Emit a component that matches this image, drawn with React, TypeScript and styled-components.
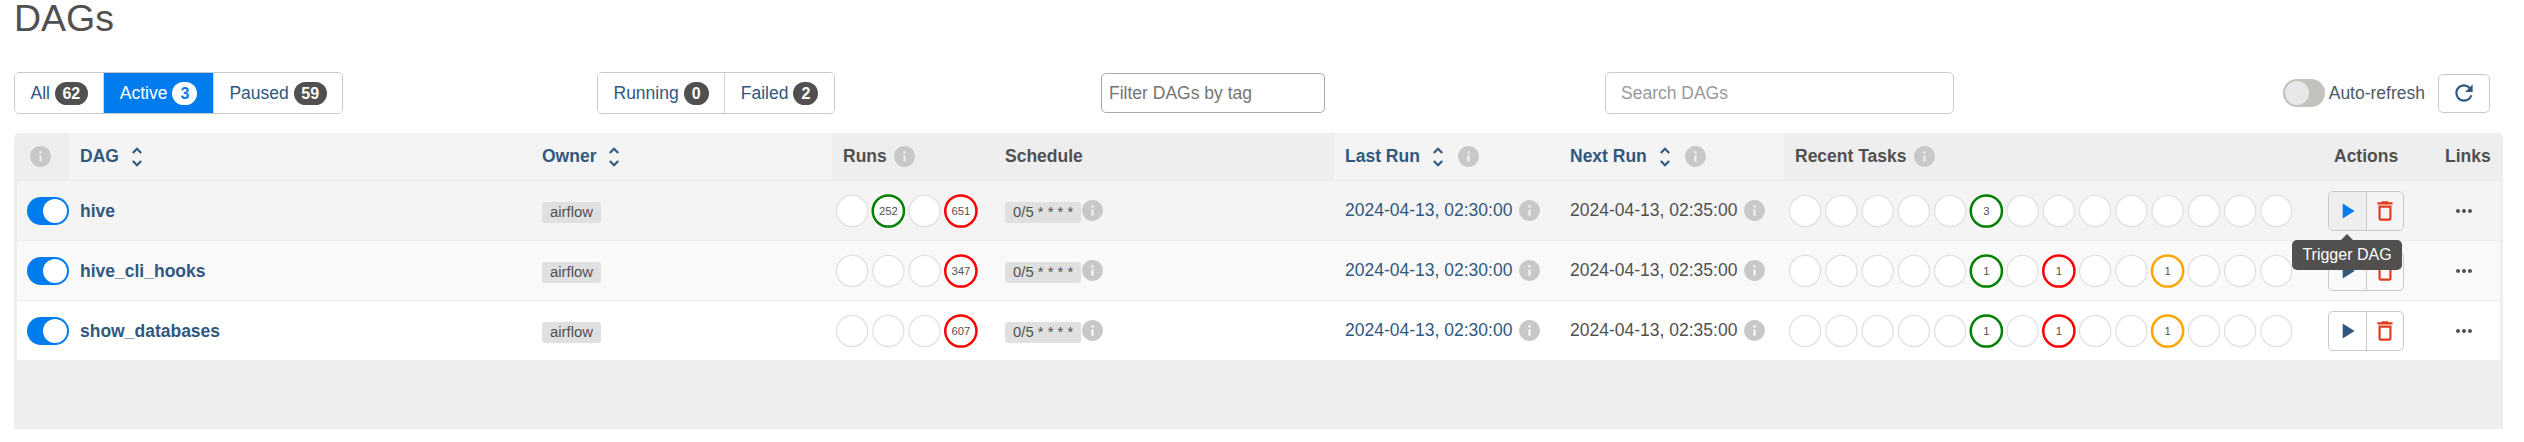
import styled, { createGlobalStyle } from "styled-components";
import {
  MdDeleteOutline,
  MdInfo,
  MdMoreHoriz,
  MdPlayArrow,
  MdRefresh,
  MdUnfoldMore,
} from "react-icons/md";

const LINK = "#30587f";
const TEXT = "#51504f";

const GlobalStyle = createGlobalStyle`
  html, body {
    margin: 0;
    background: #fff;
    color: ${TEXT};
    font-family: "Liberation Sans", Arial, sans-serif;
    font-size: 17.5px;
  }
`;

const Page = styled.div`
  padding: 0 21px 0 14px;
`;

const Title = styled.h1`
  margin: 0 0 36px;
  font-size: 37.5px;
  font-weight: 400;
  line-height: 36px;
`;

const Toolbar = styled.div`
  display: grid;
  grid-template-columns: 583px 504px 504px 1fr;
  align-items: center;
  height: 42px;
  margin-bottom: 19px;
`;

const ButtonGroup = styled.div`
  display: inline-flex;
  justify-self: start;
  height: 42px;
  box-sizing: border-box;
  border: 1px solid #c8c8c8;
  border-radius: 5px;
  overflow: hidden;
`;

const FilterButton = styled.a<{ $active?: boolean }>`
  display: flex;
  align-items: center;
  gap: 5px;
  padding: 0 15.5px;
  color: ${(p) => (p.$active ? "#fff" : LINK)};
  background: ${(p) => (p.$active ? "#017cee" : "#fff")};

  & + & {
    border-left: 1px solid #d4d4d4;
  }
`;

const Badge = styled.span<{ $active?: boolean }>`
  min-width: 25px;
  height: 23px;
  box-sizing: border-box;
  padding: 0 7.5px;
  border-radius: 12px;
  text-align: center;
  font-size: 16px;
  font-weight: 700;
  line-height: 23px;
  color: ${(p) => (p.$active ? "#017cee" : "#fff")};
  background: ${(p) => (p.$active ? "#fff" : TEXT)};
`;

const TagFilter = styled.input`
  width: 224px;
  height: 40px;
  box-sizing: border-box;
  padding: 0 7px;
  border: 1px solid #aaa;
  border-radius: 5px;
  font: inherit;

  &::placeholder {
    color: #757575;
    opacity: 1;
  }
`;

const RightTools = styled.div`
  display: flex;
  align-items: center;
  justify-content: space-between;
  width: 885px;
`;

const Search = styled.input`
  width: 349px;
  height: 42px;
  box-sizing: border-box;
  padding: 0 15px;
  border: 1px solid #ccc;
  border-radius: 5px;
  font: inherit;

  &::placeholder {
    color: #999;
    opacity: 1;
  }
`;

const AutoRefresh = styled.div`
  display: flex;
  align-items: center;
  gap: 4px;
  color: #4d5a66;
`;

const RefreshButton = styled.button`
  display: flex;
  align-items: center;
  justify-content: center;
  width: 52px;
  height: 39px;
  margin-left: 9px;
  padding: 0;
  background: #fff;
  border: 1px solid #c8c8c8;
  border-radius: 5px;
  color: ${LINK};
`;

const Switch = styled.span<{ $on?: boolean }>`
  display: flex;
  flex: none;
  justify-content: ${(p) => (p.$on ? "flex-end" : "flex-start")};
  align-items: center;
  width: 42px;
  height: 28px;
  box-sizing: border-box;
  padding: 0 2px;
  border-radius: 14px;
  background: ${(p) => (p.$on ? "#017cee" : "#c4c2be")};

  &::after {
    content: "";
    width: 24px;
    height: 24px;
    border-radius: 50%;
    background: ${(p) => (p.$on ? "#fff" : "#e8e8e8")};
  }
`;

const Panel = styled.div`
  width: 2489px;
  height: 296px;
  box-sizing: border-box;
  padding: 0 3px;
  background: #eee;
  border-radius: 5px 5px 0 0;
`;

const Table = styled.table`
  width: 2483px;
  table-layout: fixed;
  border-collapse: separate;
  border-spacing: 0;
`;

const HeadCell = styled.th<{ $sortable?: boolean }>`
  height: 47px;
  box-sizing: border-box;
  padding: 0 11px;
  text-align: left;
  font-weight: 700;
  white-space: nowrap;
  color: ${(p) => (p.$sortable ? LINK : TEXT)};
  background: ${(p) => (p.$sortable ? "#f4f4f4" : "#eee")};
`;

const HeadInner = styled.div`
  display: flex;
  align-items: center;
`;

const Row = styled.tr<{ $bg: string }>`
  background: ${(p) => p.$bg};
`;

const Cell = styled.td<{ $pad?: string }>`
  height: 60px;
  box-sizing: border-box;
  padding: ${(p) => p.$pad ?? "0 11px"};
  border-top: 1px solid #eee;
  white-space: nowrap;
`;

const CellInner = styled.div`
  display: flex;
  align-items: center;
`;

const DagLink = styled.a`
  display: inline-block;
  margin-top: 1px;
  font-weight: 700;
  color: ${LINK};
`;

const Tag = styled.span`
  display: inline-block;
  margin-top: 3px;
  padding: 0 8px;
  height: 21px;
  border-radius: 3px;
  background: #e0e0e0;
  font-size: 14.875px;
  line-height: 21px;
`;

const Info = styled(MdInfo)<{ $gap?: number }>`
  flex: none;
  margin-left: ${(p) => p.$gap ?? 5}px;
  font-size: 25px;
  color: #c8c8c8;
`;

const Sort = styled(MdUnfoldMore)`
  flex: none;
  margin-left: 5px;
  font-size: 26px;
  color: ${LINK};
`;

const LastRun = styled.a`
  color: ${LINK};
`;

const ActionGroup = styled.div`
  position: relative;
  display: flex;
  width: 76px;
  height: 40px;
  margin-left: 5px;
  box-sizing: border-box;
  border: 1px solid #c8c8c8;
  border-radius: 5px;
`;

const ActionButton = styled.span<{ $hover?: boolean; $color: string }>`
  display: flex;
  flex: 1;
  align-items: center;
  justify-content: center;
  font-size: 26px;
  color: ${(p) => p.$color};
  background: ${(p) => (p.$hover ? "#eee" : "transparent")};
  border-radius: 4px 0 0 4px;

  & + & {
    border-left: 1px solid #c8c8c8;
    border-radius: 0 4px 4px 0;
  }
`;

const Tooltip = styled.div`
  position: absolute;
  top: calc(100% + 10px);
  left: -37px;
  z-index: 2;
  width: 110px;
  height: 30px;
  border-radius: 5px;
  background: ${TEXT};
  color: #fff;
  font-size: 16px;
  line-height: 30px;
  text-align: center;

  &::before {
    content: "";
    position: absolute;
    top: -6px;
    left: 49px;
    border: 6px solid transparent;
    border-top: 0;
    border-bottom-color: ${TEXT};
  }
`;

const Dots = styled(MdMoreHoriz)`
  display: block;
  margin-left: 7px;
  font-size: 24px;
  color: ${TEXT};
`;

const CircleSvg = styled.svg`
  display: block;
`;

const CircleLabel = styled.text`
  font-size: 11.25px;
  fill: ${TEXT};
  text-anchor: middle;
  dominant-baseline: central;
`;

type Dot = { count: number; color: string };

const Circles = ({ count, dots }: { count: number; dots: Record<number, Dot> }) => (
  <CircleSvg width={count * 36.25 + 2} height={36}>
    {Array.from({ length: count }, (_, i) => {
      const dot = dots[i];
      const cx = 18.1 + i * 36.25;
      return (
        <g key={i}>
          <circle
            cx={cx}
            cy={18}
            r={15.6}
            fill="#fff"
            stroke={dot ? dot.color : "#e0e0e0"}
            strokeWidth={dot ? 2.5 : 1.25}
          />
          {dot && (
            <CircleLabel x={cx} y={18}>
              {dot.count}
            </CircleLabel>
          )}
        </g>
      );
    })}
  </CircleSvg>
);

const GREEN = "#008000";
const RED = "#ff0000";
const ORANGE = "#ffa500";

const taskDots = {
  5: { count: 1, color: GREEN },
  7: { count: 1, color: RED },
  10: { count: 1, color: ORANGE },
};

const dags = [
  {
    name: "hive",
    bg: "#f4f4f4",
    runs: { 1: { count: 252, color: GREEN }, 3: { count: 651, color: RED } },
    tasks: { 5: { count: 3, color: GREEN } },
    hover: true,
  },
  {
    name: "hive_cli_hooks",
    bg: "#f9f9f9",
    runs: { 3: { count: 347, color: RED } },
    tasks: taskDots,
    hover: false,
  },
  {
    name: "show_databases",
    bg: "#fff",
    runs: { 3: { count: 607, color: RED } },
    tasks: taskDots,
    hover: false,
  },
];

const colWidths = [52, 462, 301, 162, 340, 225, 225, 539, 111, 66];

export default function App() {
  return (
    <Page>
      <GlobalStyle />
      <Title>DAGs</Title>
      <Toolbar>
        <ButtonGroup>
          <FilterButton>
            All <Badge>62</Badge>
          </FilterButton>
          <FilterButton $active>
            Active <Badge $active>3</Badge>
          </FilterButton>
          <FilterButton>
            Paused <Badge>59</Badge>
          </FilterButton>
        </ButtonGroup>
        <ButtonGroup>
          <FilterButton>
            Running <Badge>0</Badge>
          </FilterButton>
          <FilterButton>
            Failed <Badge>2</Badge>
          </FilterButton>
        </ButtonGroup>
        <TagFilter placeholder="Filter DAGs by tag" />
        <RightTools>
          <Search placeholder="Search DAGs" />
          <AutoRefresh>
            <Switch />
            Auto-refresh
            <RefreshButton>
              <MdRefresh size={26} />
            </RefreshButton>
          </AutoRefresh>
        </RightTools>
      </Toolbar>
      <Panel>
        <Table>
          <colgroup>
            {colWidths.map((w, i) => (
              <col key={i} width={w} />
            ))}
          </colgroup>
          <thead>
            <tr>
              <HeadCell>
                <HeadInner>
                  <Info $gap={0} />
                </HeadInner>
              </HeadCell>
              <HeadCell $sortable>
                <HeadInner>
                  DAG <Sort />
                </HeadInner>
              </HeadCell>
              <HeadCell $sortable>
                <HeadInner>
                  Owner <Sort />
                </HeadInner>
              </HeadCell>
              <HeadCell>
                <HeadInner>
                  Runs <Info />
                </HeadInner>
              </HeadCell>
              <HeadCell>Schedule</HeadCell>
              <HeadCell $sortable>
                <HeadInner>
                  Last Run <Sort /> <Info />
                </HeadInner>
              </HeadCell>
              <HeadCell $sortable>
                <HeadInner>
                  Next Run <Sort /> <Info />
                </HeadInner>
              </HeadCell>
              <HeadCell>
                <HeadInner>
                  Recent Tasks <Info />
                </HeadInner>
              </HeadCell>
              <HeadCell>Actions</HeadCell>
              <HeadCell>Links</HeadCell>
            </tr>
          </thead>
          <tbody>
            {dags.map((dag) => (
              <Row key={dag.name} $bg={dag.bg}>
                <Cell $pad="0 0 0 10px">
                  <Switch $on />
                </Cell>
                <Cell>
                  <DagLink>{dag.name}</DagLink>
                </Cell>
                <Cell>
                  <Tag>airflow</Tag>
                </Cell>
                <Cell $pad="0 0 0 2px">
                  <Circles count={4} dots={dag.runs} />
                </Cell>
                <Cell>
                  <CellInner>
                    <Tag>0/5 * * * *</Tag>
                    <Info $gap={-1} />
                  </CellInner>
                </Cell>
                <Cell>
                  <CellInner>
                    <LastRun>2024-04-13, 02:30:00</LastRun>
                    <Info />
                  </CellInner>
                </Cell>
                <Cell>
                  <CellInner>
                    2024-04-13, 02:35:00
                    <Info />
                  </CellInner>
                </Cell>
                <Cell $pad="0 0 0 3px">
                  <Circles count={14} dots={dag.tasks} />
                </Cell>
                <Cell $pad="0">
                  <ActionGroup>
                    <ActionButton $hover={dag.hover} $color={dag.hover ? "#017cee" : LINK}>
                      <MdPlayArrow />
                    </ActionButton>
                    <ActionButton $color="#e43921">
                      <MdDeleteOutline />
                    </ActionButton>
                    {dag.hover && <Tooltip>Trigger DAG</Tooltip>}
                  </ActionGroup>
                </Cell>
                <Cell $pad="0 0 0 11px">
                  <Dots />
                </Cell>
              </Row>
            ))}
          </tbody>
        </Table>
      </Panel>
    </Page>
  );
}
